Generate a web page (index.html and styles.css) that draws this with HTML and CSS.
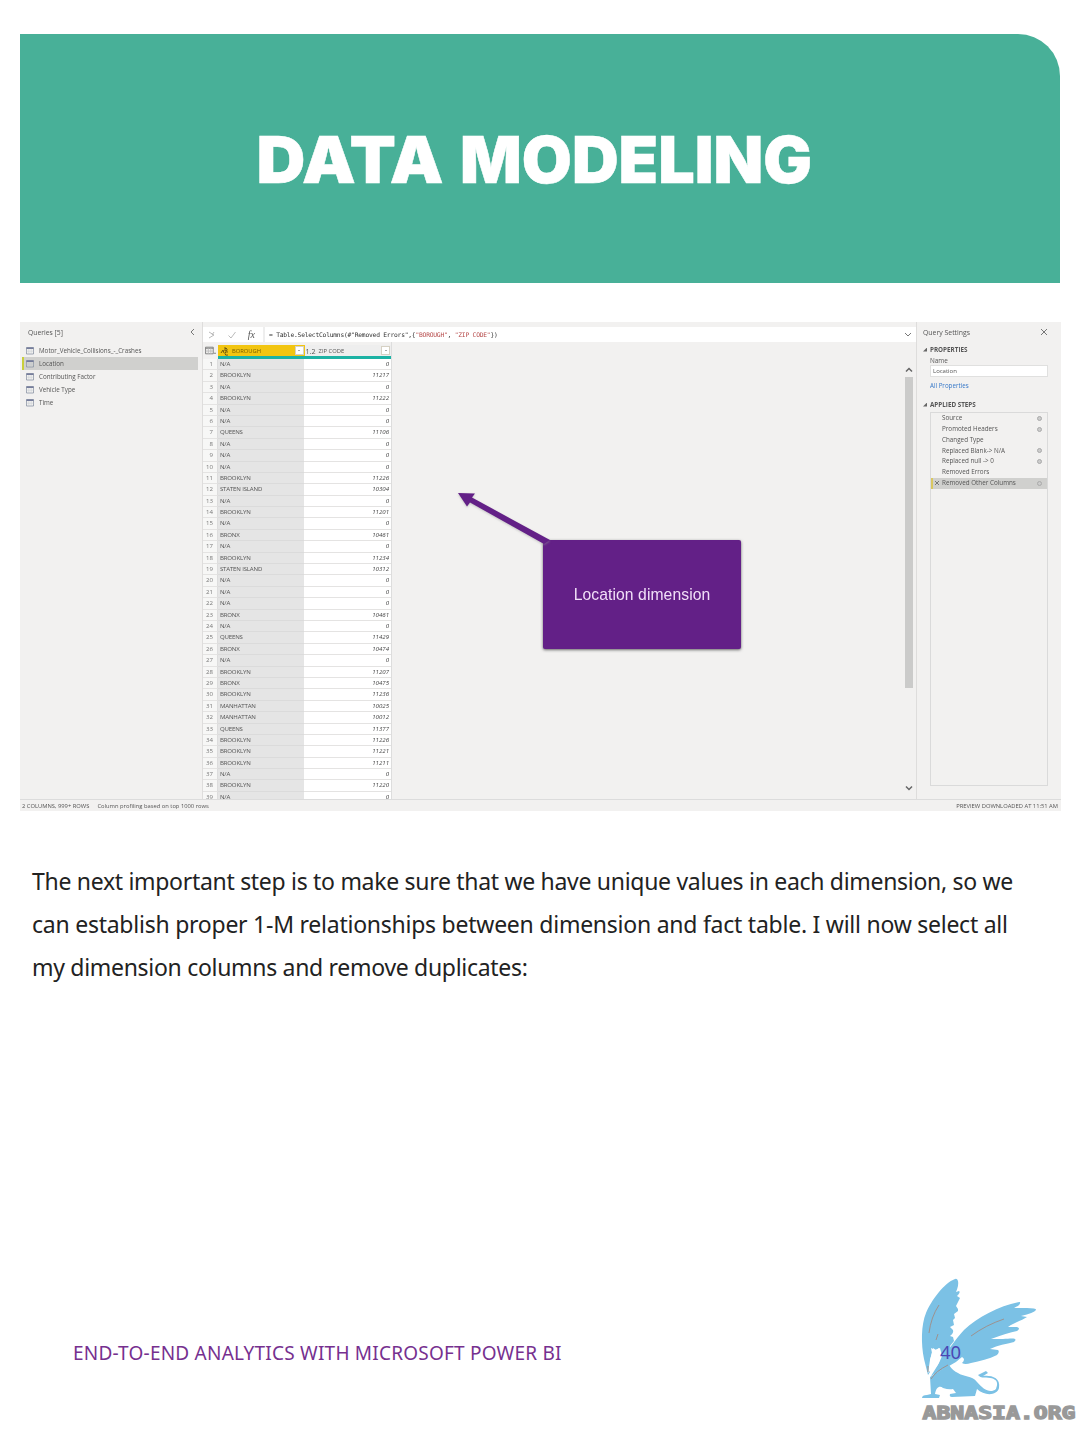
FILE: index.html
```html
<!DOCTYPE html>
<html lang="en">
<head>
<meta charset="utf-8">
<title>Data Modeling</title>
<link rel="stylesheet" href="styles.css">
</head>
<body>
<header class="banner">
  <svg class="headline" viewBox="0 0 1040 248" role="heading" aria-level="1">
    <text x="236.500" y="149" textLength="187" lengthAdjust="spacingAndGlyphs">DATA</text>
    <text x="440" y="149" textLength="352" lengthAdjust="spacingAndGlyphs">MODELING</text>
  </svg>
</header>

<section class="editor">
  <div class="workspace">
    <aside class="queries">
      <div class="pane-title"><span class="queries-label">Queries [5]</span><svg class="chevron-left" viewBox="0 0 5 8"><path d="M4 1 1 4l3 3"/></svg></div>
      <ul class="query-list">
        <li><svg class="table-icon" viewBox="0 0 8 8"><path d="M.5.5h7v6.500h-7z"/><path class="table-head" d="M.5 1.200h7"/><path class="table-grid" d="M.5 4.200h7M2.800 2v5M5.200 2v5"/></svg><span>Motor_Vehicle_Collisions_-_Crashes</span></li>
        <li class="selected"><svg class="table-icon" viewBox="0 0 8 8"><path d="M.5.5h7v6.500h-7z"/><path class="table-head" d="M.5 1.200h7"/><path class="table-grid" d="M.5 4.200h7M2.800 2v5M5.200 2v5"/></svg><span>Location</span></li>
        <li><svg class="table-icon" viewBox="0 0 8 8"><path d="M.5.5h7v6.500h-7z"/><path class="table-head" d="M.5 1.200h7"/><path class="table-grid" d="M.5 4.200h7M2.800 2v5M5.200 2v5"/></svg><span>Contributing Factor</span></li>
        <li><svg class="table-icon" viewBox="0 0 8 8"><path d="M.5.5h7v6.500h-7z"/><path class="table-head" d="M.5 1.200h7"/><path class="table-grid" d="M.5 4.200h7M2.800 2v5M5.200 2v5"/></svg><span>Vehicle Type</span></li>
        <li><svg class="table-icon" viewBox="0 0 8 8"><path d="M.5.5h7v6.500h-7z"/><path class="table-head" d="M.5 1.200h7"/><path class="table-grid" d="M.5 4.200h7M2.800 2v5M5.200 2v5"/></svg><span>Time</span></li>
      </ul>
    </aside>

    <main class="preview">
      <div class="formula-bar">
        <div class="formula-tools">
          <svg viewBox="0 0 8 8"><path d="M1 1l5 3-5 3M6 1 4 4"/></svg>
          <svg viewBox="0 0 8 8"><path d="M.5 4.500 3 7l4.500-6"/></svg>
          <i>fx</i>
        </div>
        <code>= Table.SelectColumns(#"Removed Errors",{<b>"BOROUGH"</b>, <b>"ZIP CODE"</b>})</code>
        <svg class="expand" viewBox="0 0 8 6"><path d="M1 1l3 3 3-3"/></svg>
      </div>
      <div class="grid-area">
        <div class="grid">
          <div class="grid-head">
            <div class="corner"><svg viewBox="0 0 10 8"><path d="M.5 1h7v6h-7zM.5 2h7"/><path class="corner-grid" d="M.5 4.500h7M3 2v5M5.300 2v5"/><path d="M8 6.500h2"/></svg></div>
            <div class="col borough"><svg class="type-icon" viewBox="0 0 10 10"><path d="M1 7l2-3 1 3M5 1v4q3 0 2-2T5 3M8 6q-3-1-3 1.500T8 9"/></svg><span>BOROUGH</span><em class="drop"></em></div>
            <div class="col zip"><span class="type">1.2</span><span>ZIP CODE</span><em class="drop"></em></div>
          </div>
          <div class="rows" id="rows"></div>
        </div>
        <div class="scrollbar">
          <svg viewBox="0 0 8 6"><path d="M1 4.500l3-3 3 3"/></svg>
          <div class="thumb"></div>
          <svg class="down" viewBox="0 0 8 6"><path d="M1 1.500l3 3 3-3"/></svg>
        </div>
        <div class="callout">Location dimension</div>
        <svg class="arrow" viewBox="0 0 100 60"><path d="M2 4 19 4.500 16 8.500 94 51 88 55 14 13.500 11 17.500z"/></svg>
      </div>
    </main>

    <aside class="settings">
      <div class="settings-title"><span>Query Settings</span><svg viewBox="0 0 8 8"><path d="M1 1l6 6M7 1 1 7"/></svg></div>
      <h2><i class="tri"></i>PROPERTIES</h2>
      <div class="field-label">Name</div>
      <div class="field">Location</div>
      <div class="all-link">All Properties</div>
      <h2 class="steps-head"><i class="tri"></i>APPLIED STEPS</h2>
      <ul class="steps">
        <li>Source<i class="gear"></i></li>
        <li>Promoted Headers<i class="gear"></i></li>
        <li>Changed Type</li>
        <li>Replaced Blank-&gt; N/A<i class="gear"></i></li>
        <li>Replaced null -&gt; 0<i class="gear"></i></li>
        <li>Removed Errors</li>
        <li class="current"><svg class="step-x" viewBox="0 0 6 6"><path d="M1 1l4 4M5 1 1 5"/></svg>Removed Other Columns<i class="gear"></i></li>
      </ul>
    </aside>
  </div>
  <footer class="status"><span>2 COLUMNS, 999+ ROWS</span><span class="profiling">Column profiling based on top 1000 rows</span><span class="downloaded">PREVIEW DOWNLOADED AT 11:51 AM</span></footer>
</section>

<p class="copy">The next important step is to make sure that we have unique values in each dimension, so we<br><span class="looser">can establish proper 1-M relationships between dimension and fact table. I will now select all</span><br>my dimension columns and remove duplicates:</p>

<footer class="page-footer">
  <span class="doc-title">END-TO-END ANALYTICS WITH MICROSOFT POWER BI</span>
  <div class="brand">
    <svg viewBox="0 0 180 180" width="180" height="180">
      <g class="griffin">
        <path d="M55 19C44 23 31 41 26 53C21 65 21 84 24 99L28 115L30 112L30 100L32 93L31 88L35 90L40 88L42 96L37 108L52 92L50 86L54 81L53 77L50 76Q54 73 53 70L50 67L54 65L53 60L55 58L54 54L58 51L58 49L56 46L60 38L57 36Q61 32 59 31L56 32Q59 25 58 21Q57 18 55 19z"/>
        <path d="M120 42C101 45 78 57 64 70C55 80 47 91 36 108L31 116L49 106Q57 102 62 97Q66 99 62 103Q65 105 71 103C80 101 89 99 97 95Q100 92 98 90L90 89C98 85 106 84 114 82C118 78 114 78 103 79L91 79Q107 73 117 71Q121 68 117 67L108 67C115 62 123 60 127 57L121 56Q134 53 136 50Q137 48 127 48L114 48Q121 45 120 42z"/>
        <path d="M49 105L30 117L31 134L27 135Q22 135 22 138L39 138L40 135L35 134C36 127 40 125 43 128Q49 130 53 129L56 133L50 134Q49 137 52 137L75 136L77 129C84 136 97 136 99 128C101 117 90 115 83 116L88 113L86 111L78 115Q80 118 86 117.500C99 118 98 124 96 129C90 134 83 129 77 122C72 115 63 117 58 113Q53 111 49 105z"/>
      </g>
      <path class="face" d="M33 88L36 90L39 88L40 92L41 97L36 106L32 109L28 113L30 100z"/>
      <path class="feather" d="M39 45Q31 57 29 73M38 74l-2 6M71 76Q86 65 104 59M31 119Q36 111 48 105M28 106v6"/>
      <text class="brand-name" x="22.500" y="159" textLength="153" lengthAdjust="spacingAndGlyphs">ABNASIA.ORG</text>
      <text class="page-number" x="40" y="99">40</text>
    </svg>
  </div>
</footer>
<script src="rows.js"></script>
</body>
</html>
```
FILE: styles.css
```css
* { box-sizing: border-box; }
body { margin: 0; width: 1080px; height: 1440px; overflow: hidden; background: #fff; display: flex; flex-direction: column; font-family: "Open Sans", "Noto Sans", sans-serif; }
svg { fill: none; stroke: #777; flex: none; }
ul, h2, p { margin: 0; padding: 0; list-style: none; }

.banner { margin: 34px 20px 0; height: 248.500px; background: #48b098; border-radius: 0 42px 0 0; flex: none; }
.headline { display: block; width: 1040px; height: 248px; }
.headline text { font: 900 64px Inter, sans-serif; fill: #fff; stroke: #fff; stroke-width: .5; }

.editor { margin: 39.500px 19px 0 20px; height: 489px; flex: none; background: #f2f1f0; font-size: 6.400px; color: #555; display: flex; flex-direction: column; white-space: nowrap; filter: blur(.3px); }
.workspace { flex: 1; min-height: 0; display: flex; }
.queries { width: 178px; padding-top: 5px; flex: none; font-size: 6.250px; }
.pane-title { display: flex; justify-content: space-between; align-items: center; height: 10px; padding: 0 3px 0 8px; font-size: 6.800px; }
.chevron-left { width: 5px; height: 8px; }
.query-list { padding-top: 7px; }
.query-list li { height: 13px; display: flex; align-items: center; gap: 5px; padding-left: 6px; }
.query-list .selected { background: #d0d0ce; border-left: 2px solid #c9cf3b; padding-left: 2px; margin-left: 2px; }
.table-icon { width: 8px; height: 8px; stroke: #8b96a5; stroke-width: .8; }
.table-head { stroke: #6f7697; stroke-width: 1.500; }
.table-grid { stroke: #c5c9cf; stroke-width: .5; }

.preview { flex: 1; margin-left: 4px; border-left: 1px solid #dedddc; border-right: 1px solid #dedddc; display: flex; flex-direction: column; min-width: 0; padding-top: 5px; }
.formula-bar { height: 15px; background: #fff; display: flex; align-items: center; padding-right: 4px; flex: none; }
.formula-tools { width: 62px; height: 15px; display: flex; align-items: center; justify-content: space-between; padding: 0 8px 0 5px; border-right: 2px solid #eee; }
.formula-tools svg { width: 8px; height: 8px; stroke: #aaa; stroke-width: .8; }
.formula-tools i { font: italic 10px "Liberation Serif", serif; }
code { font: 6.300px "DejaVu Sans Mono", monospace; letter-spacing: -.22px; padding-left: 4px; color: #333; }
code b { font-weight: 400; color: #b64a4a; }
.expand { width: 8px; height: 6px; margin-left: auto; }
.grid-area { flex: 1; min-height: 0; display: flex; justify-content: space-between; position: relative; }
.grid { width: 189px; padding-top: 3px; overflow: hidden; border-right: 1px solid #ddd; }
.grid-head { display: flex; height: 14px; }
.corner { width: 15px; padding: 1px 2px; }
.corner svg { width: 11px; height: 9px; stroke-width: .8; }
.corner-grid { stroke: #bbb; }
.col { height: 14px; border-bottom: 3px solid #1cb2a4; display: flex; align-items: center; padding: 0 1px 0 2px; font-size: 5.800px; }
.borough { width: 87px; background: #f2c511; color: #765d00; gap: 2px; }
.zip { width: 87px; gap: 3px; background: #eee; padding-left: 1px; }
.type { font-size: 7.200px; }
.type-icon { width: 10px; height: 10px; stroke: #705b10; }
.drop { width: 9px; height: 9px; background: #fff; border: 1px solid #d6d1c4; margin-left: auto; display: grid; place-items: center; }
.drop::after { content: ""; border: 1.500px solid transparent; border-top-color: #555; border-bottom: 0; }
.row { height: 11.400px; display: flex; line-height: 10.800px; font-size: 6.100px; }
.row span { border-bottom: 1px solid #e4e3e2; }
.idx { width: 15px; padding-right: 4px; text-align: right; background: #f7f7f6; border-right: 1px solid #ddd; color: #777; }
.name { width: 87px; padding-left: 2px; background: #e5e5e5; letter-spacing: -.18px; }
.row .name { border-bottom-color: #dbdbdb; }
.code { width: 87px; padding-right: 2px; text-align: right; font-style: italic; background: #fff; color: #444; }
.scrollbar { width: 13px; padding: 25px 3px 8px 2px; display: flex; flex-direction: column; align-items: center; }
.scrollbar svg { width: 8px; height: 6px; stroke: #666; stroke-width: 1.500; }
.thumb { width: 8px; height: 311px; background: #cbcbca; margin-top: 4px; }
.scrollbar .down { margin-top: auto; }
.callout { position: absolute; left: 340px; top: 198px; width: 198px; height: 109px; border-radius: 2px; background: #632087; color: #f1dff8; font: 15.700px "Liberation Sans", sans-serif; letter-spacing: .08px; display: grid; place-items: center; box-shadow: 0 1px 3px #666; }
.arrow { position: absolute; left: 253px; top: 147px; width: 100px; height: 60px; fill: #632087; stroke: none; filter: drop-shadow(0 1px 1px #9998); }

.settings { width: 144px; flex: none; padding: 5px 13px 0 6px; }
.settings-title { display: flex; align-items: center; justify-content: space-between; height: 10px; font-size: 6.900px; }
.settings-title svg { width: 8px; height: 8px; }
h2 { display: flex; align-items: center; gap: 3px; height: 9px; margin-top: 8px; font-size: 6.300px; color: #555; }
.tri { width: 4px; height: 4px; background: #666; clip-path: polygon(100% 0, 100% 100%, 0 100%); }
.field-label { padding-left: 7px; height: 11px; line-height: 13px; }
.field { margin: 0 0 0 7px; height: 12px; line-height: 11px; background: #fff; border: 1px solid #e0e0df; padding-left: 2px; width: 118px; font-size: 6px; }
.all-link { color: #3577c8; padding-left: 7px; height: 17px; line-height: 17px; font-size: 6.200px; }
.steps-head { margin-top: 6px; }
.steps { margin: 3px 0 0 7px; width: 118px; height: 374px; border: 1px solid #dadada; font-size: 6.300px; }
.steps li { height: 10.850px; line-height: 10.850px; padding: 0 5px 0 11px; display: flex; align-items: center; position: relative; }
.steps .current { background: #d0d0ce; border-left: 2px solid #d9c761; padding-left: 9px; }
.step-x { position: absolute; left: 1px; width: 6px; height: 6px; }
.gear { margin-left: auto; width: 5px; height: 5px; border: 1px solid #aaa; border-radius: 50%; background: #ccc; }
.status { height: 12px; border-top: 1px solid #dcdcdc; display: flex; align-items: center; padding: 0 3px 0 2px; font-size: 5.800px; flex: none; }
.profiling { margin-left: 8px; }
.downloaded { margin-left: auto; }

.copy { padding: 49px 0 0 32px; font: 23px/43px "Noto Sans", sans-serif; letter-spacing: -.3px; color: #222; white-space: nowrap; flex: none; }
.looser { letter-spacing: -.245px; }
.page-footer { margin-top: auto; height: 180px; display: flex; justify-content: space-between; color: #76308f; }
.doc-title { padding: 80px 0 0 73px; font: 19px/27px "Noto Sans", sans-serif; letter-spacing: .22px; white-space: nowrap; }
.brand { width: 180px; height: 180px; }
.griffin { fill: #7bc1e5; stroke: none; }
.face { fill: #fff; stroke: none; }
.feather { stroke: #9c9290; stroke-width: 1; }
.brand-name { font: bold 17px "DejaVu Sans Mono", monospace; fill: #999; stroke: #999; stroke-width: 1.300; }
.page-number { font: 18.500px "Noto Sans", sans-serif; fill: #4b48b5; stroke: none; }
```
FILE: rows.js
```js
const boroughs = { N: "N/A", B: "BROOKLYN", Q: "QUEENS", S: "STATEN ISLAND", X: "BRONX", M: "MANHATTAN" };
const records = "N0 B11217 N0 B11222 N0 N0 Q11106 N0 N0 N0 B11226 S10304 N0 B11201 N0 X10461 N0 B11234 S10312 N0 N0 N0 X10461 N0 Q11429 X10474 N0 B11207 X10475 B11236 M10025 M10012 Q11377 B11226 B11221 B11211 N0 B11220 N0".split(" ");
document.getElementById("rows").innerHTML = records.map((record, i) =>
  `<div class="row"><span class="idx">${i + 1}</span><span class="name">${boroughs[record[0]]}</span><span class="code">${record.slice(1)}</span></div>`
).join("");
```
